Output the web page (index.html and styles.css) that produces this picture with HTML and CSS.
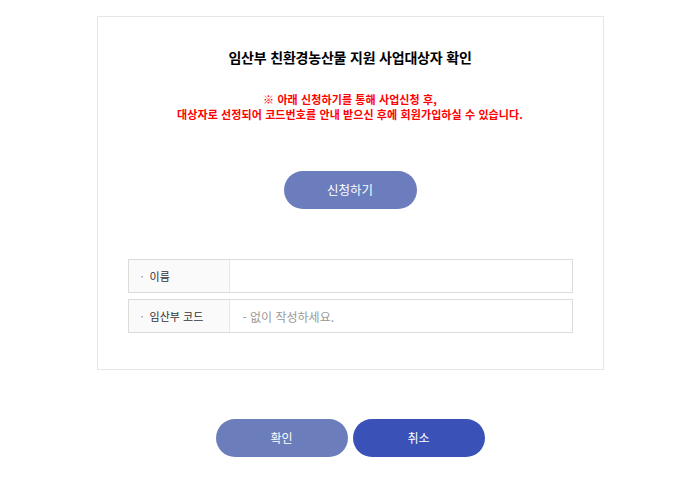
FILE: index.html
```html
<!DOCTYPE html>
<html lang="ko">
<head>
    <meta charset="UTF-8">
    <meta name="viewport" content="width=device-width, initial-scale=1.0">
    <title>임산부 친환경농산물 지원 사업대상자 확인</title>
    <link rel="stylesheet" href="styles.css">
</head>
<body>

<div class="confirm-box">
    <h2 class="confirm-title">임산부 친환경농산물 지원 사업대상자 확인</h2>

    <!-- 안내 문구 -->
    <p class="notice">
        ※ 아래 신청하기를 통해 사업신청 후,<br>
        대상자로 선정되어 코드번호를 안내 받으신 후에 회원가입하실 수 있습니다.
    </p>

    <div class="apply-wrap">
        <a href="#" class="btn btn-apply">신청하기</a>
    </div>

    <!-- 입력 폼 -->
    <div class="form-rows">
        <div class="form-row">
            <div class="form-label"><span class="dot">·</span>이름</div>
            <div class="form-field"><input type="text" title="이름"></div>
        </div>
        <div class="form-row">
            <div class="form-label"><span class="dot">·</span>임산부 코드</div>
            <div class="form-field"><input type="text" title="임산부 코드" placeholder="- 없이 작성하세요."></div>
        </div>
    </div>
</div>

<div class="btn-area">
    <a href="#" class="btn btn-ok">확인</a>
    <a href="#" class="btn btn-cancel">취소</a>
</div>

</body>
</html>
```

FILE: styles.css
```css
body {
    font-family: "Noto Sans CJK KR", "Noto Sans", sans-serif;
    margin: 0;
    background: #fff;
    color: #000;
}
.confirm-box {
    width: 505px;
    margin: 16px auto 0;
    padding: 30px 0 36px;
    border: 1px solid #e6e6e6;
}
.confirm-title {
    margin: 0;
    font-size: 14px;
    font-weight: bold;
    text-align: center;
    letter-spacing: -0.2px;
    line-height: 20px;
}
.notice {
    margin: 25px 0 0;
    color: #ff0000;
    font-size: 11px;
    font-weight: bold;
    text-align: center;
    line-height: 15px;
    letter-spacing: 0.1px;
}
.apply-wrap {
    margin-top: 49px;
    text-align: center;
}
.btn {
    display: inline-block;
    height: 38px;
    line-height: 38px;
    border-radius: 19px;
    color: #fff;
    font-size: 12px;
    text-align: center;
    text-decoration: none;
}
.btn-apply {
    width: 133px;
    font-size: 12.5px;
    background-color: #6c7dbd;
}
.form-rows {
    margin: 50px 30px 0 30px;
}
.form-row {
    display: flex;
    height: 32px;
    border: 1px solid #dcdcdc;
    margin-bottom: 6px;
}
.form-row:last-child {
    margin-bottom: 0;
}
.form-label {
    width: 101px;
    padding-left: 12px;
    box-sizing: border-box;
    background-color: #fafafa;
    border-right: 1px solid #e6e6e6;
    font-size: 11px;
    color: #333;
    line-height: 32px;
}
.form-label .dot {
    color: #888;
    margin-right: 6px;
}
.form-field {
    flex: 1;
}
.form-field input {
    width: 100%;
    height: 32px;
    border: 0;
    padding: 0 13px;
    box-sizing: border-box;
    font-family: inherit;
    font-size: 12px;
    outline: none;
}
.form-field input::placeholder {
    color: #999;
}
.btn-area {
    margin-top: 49px;
    display: flex;
    justify-content: center;
    gap: 5px;
}
.btn-area .btn {
    width: 132px;
}
.btn-ok {
    background-color: #6c7dbb;
}
.btn-cancel {
    background-color: #3a51b8;
}
```
